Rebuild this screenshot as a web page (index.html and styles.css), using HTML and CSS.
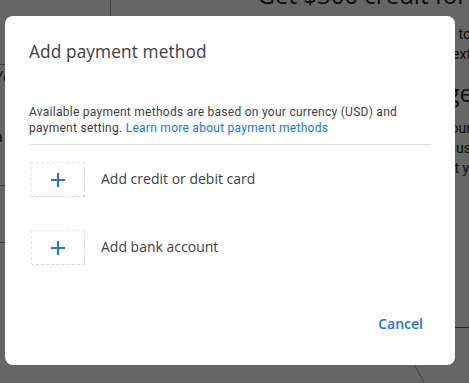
FILE: index.html
```html
<!DOCTYPE html>
<html lang="en">
<head>
    <meta charset="UTF-8">
    <meta name="viewport" content="width=device-width, initial-scale=1.0">
    <title>Add payment method</title>
    <link rel="stylesheet" href="styles.css">
</head>
<body>
    <div class="page">
        <div class="sidebar">
            <div class="side-block side-top"></div>
            <div class="side-block side-mid">
                <p>Yo</p>
                <p>t</p>
                <p></p>
                <p>a</p>
            </div>
            <div class="side-block side-low"></div>
        </div>
        <div class="main">
            <div class="promo-title">Get $300 credit for</div>
            <div class="promo-line">New customers get started to</div>
            <div class="promo-line">use on the next</div>
            <div class="promo-head">Free tier usage</div>
            <div class="promo-line">Your</div>
            <div class="promo-line">Thus</div>
            <div class="promo-line indent">Try it yo</div>
            <div class="promo-rule"></div>
            <svg class="promo-mark" width="14" height="20" viewBox="0 0 14 20"><path d="M1 0 L12 20" stroke="#999" stroke-width="1" fill="none"/></svg>
        </div>
    </div>

    <div class="overlay">
        <div class="dialog">
            <h2 class="dialog-title">Add payment method</h2>
            <p class="dialog-text">Available payment methods are based on your currency (USD) and payment setting. <a href="#" class="link">Learn more about payment methods</a></p>
            <div class="divider"></div>

            <div class="method-list">
                <div class="method">
                    <div class="method-icon">
                        <svg width="14" height="14" viewBox="0 0 14 14"><path d="M7 0 V14 M0 7 H14" stroke="#1a73e8" stroke-width="2" fill="none"/></svg>
                    </div>
                    <span class="method-label">Add credit or debit card</span>
                </div>
                <div class="method">
                    <div class="method-icon">
                        <svg width="14" height="14" viewBox="0 0 14 14"><path d="M7 0 V14 M0 7 H14" stroke="#1a73e8" stroke-width="2" fill="none"/></svg>
                    </div>
                    <span class="method-label">Add bank account</span>
                </div>
            </div>

            <div class="actions">
                <button class="btn-text">Cancel</button>
            </div>
        </div>
    </div>
</body>
</html>
```

FILE: styles.css
```css
* {
    margin: 0;
    padding: 0;
    box-sizing: border-box;
}

body {
    font-family: Roboto, 'Liberation Sans', sans-serif;
    background: #fff;
    color: #202124;
    overflow: hidden;
    height: 100vh;
}

.page {
    display: flex;
    align-items: flex-start;
    height: 100vh;
}

.sidebar {
    width: 111px;
    height: 300px;
    border-right: 1px solid #999;
    flex-shrink: 0;
}

.side-block {
    border-bottom: 1px solid #999;
}

.side-top {
    height: 65px;
}

.side-mid {
    height: 121px;
    padding-top: 2px;
    font-size: 14px;
    line-height: 20px;
}

.side-mid p {
    height: 20px;
    margin-left: -5px;
}

.side-low {
    height: 57px;
}

.main {
    flex: 1;
    height: 100vh;
    position: relative;
    overflow: hidden;
    white-space: nowrap;
    text-align: right;
}

.promo-title {
    font-family: 'Open Sans', sans-serif;
    font-size: 24px;
    line-height: 24px;
    margin-top: -17px;
    margin-right: 2px;
}

.promo-line {
    font-size: 14px;
    line-height: 20px;
    margin-right: -2px;
}

.promo-title + .promo-line {
    margin-top: 17px;
}

.promo-head {
    font-family: 'Open Sans', sans-serif;
    font-size: 24px;
    line-height: 34px;
    margin: 12px -4px 8px 0;
}

.promo-line.indent {
    margin-right: -8px;
}

.promo-rule {
    margin: 149px 0 0 auto;
    width: 14px;
    border-top: 1px solid #555;
}

.promo-mark {
    position: absolute;
    left: 302px;
    top: 364px;
}

.overlay {
    position: fixed;
    inset: 0;
    background: rgba(0, 0, 0, 0.6);
    padding: 16px 0 0 5px;
}

.dialog {
    width: 450px;
    background: #fff;
    border-radius: 8px;
    padding: 24px;
    color: #3c4043;
}

.dialog-title {
    font-family: 'Open Sans', sans-serif;
    font-weight: 400;
    font-size: 17.3px;
    line-height: 24px;
    color: #3c4043;
    letter-spacing: 0.1px;
}

.dialog-text {
    margin-top: 40px;
    font-size: 12px;
    line-height: 16px;
    color: #3c4043;
    letter-spacing: 0.27px;
}

.link {
    color: #1a73e8;
    text-decoration: none;
}

.divider {
    margin-top: 8px;
    height: 1px;
    background: #dadce0;
}

.method-list {
    display: flex;
    flex-direction: column;
    gap: 33px;
    margin-top: 17px;
}

.method {
    display: flex;
    align-items: center;
    height: 35px;
}

.method-icon {
    width: 54px;
    height: 35px;
    margin-left: 2px;
    border: 1px dashed #e3e3e3;
    border-right-color: #d6d6d6;
    border-bottom-color: #d6d6d6;
    display: flex;
    align-items: center;
    justify-content: center;
}

.method-label {
    margin-left: 16px;
    margin-top: -2px;
    font-family: 'Open Sans', sans-serif;
    font-weight: 500;
    font-size: 14px;
    color: #3c4043;
}

.actions {
    display: flex;
    justify-content: flex-end;
    margin-top: 40px;
}

.btn-text {
    height: 36px;
    padding: 0 8px;
    background: none;
    border: none;
    font-family: 'Open Sans', sans-serif;
    font-weight: 600;
    font-size: 14px;
    color: #1a73e8;
    cursor: pointer;
}
```
